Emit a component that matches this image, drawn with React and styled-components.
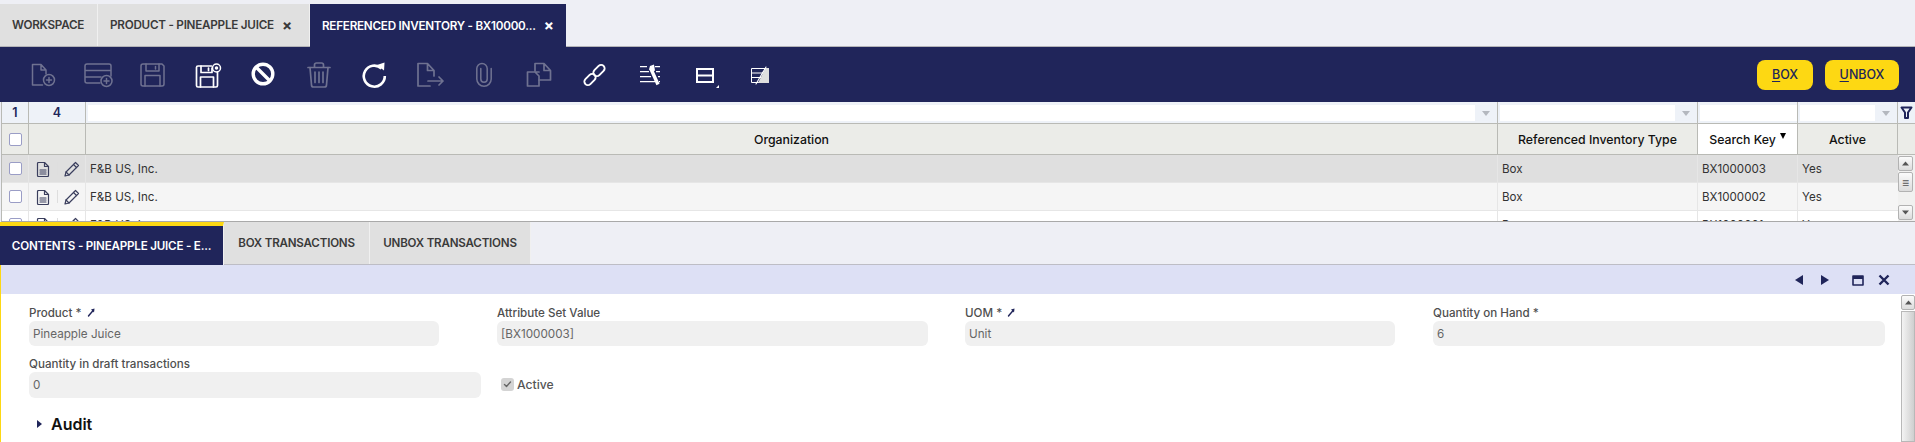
import React from 'react';
import styled, { createGlobalStyle } from 'styled-components';

const NAVY = '#20255a';
const YELLOW = '#fdd813';
const FAINT = '#6f7291';
const WHITE = '#ffffff';
const LINE = '#b9bab5';
const COLUMNS = '27px 57px 1412px 200px 100px 100px 1fr';

const GlobalStyle = createGlobalStyle`
  html, body {
    margin: 0;
    padding: 0;
    height: 442px;
    overflow: hidden;
    background: #eeeff5;
    font-family: Inter, "Noto Sans", sans-serif;
    font-size: 12px;
    color: #202020;
  }
  * { box-sizing: border-box; }
`;

const Page = styled.div`
  width: 1915px;
  height: 442px;
  display: flex;
  flex-direction: column;
  overflow: hidden;
`;

/* top tabs */
const TopTabs = styled.div`
  height: 47px;
  padding-top: 4px;
  display: flex;
  border-bottom: 1px solid #b4b4b8;
`;

const TopTab = styled.div`
  width: ${p => p.$w}px;
  display: flex;
  align-items: center;
  justify-content: space-between;
  padding: 0 17px 0 12px;
  font-size: 11.7px;
  font-weight: 600;
  letter-spacing: -0.25px;
  white-space: nowrap;
  background: ${p => (p.$active ? NAVY : '#e0e0e0')};
  color: ${p => (p.$active ? WHITE : '#3a3a3a')};
  border-right: 1px solid ${p => (p.$active ? NAVY : '#f0f0f0')};
  margin-bottom: ${p => (p.$active ? '-1px' : '0')};
`;

const CloseMark = styled.span`
  font-size: 15px;
  font-weight: 700;
  margin-left: 8px;
`;

/* toolbar */
const Toolbar = styled.div`
  height: 55px;
  background: ${NAVY};
  display: flex;
  align-items: center;
  justify-content: space-between;
  padding: 0 16px 0 15px;
`;

const ToolIcons = styled.div`
  display: flex;
  align-items: center;
`;

const ToolCell = styled.div`
  width: 55.2px;
  height: 36px;
  display: flex;
  justify-content: center;
  color: ${p => (p.$on ? WHITE : FAINT)};
`;

const ToolButtons = styled.div`
  display: flex;
  gap: 12px;
`;

const YellowButton = styled.div`
  width: ${p => p.$w}px;
  height: 30px;
  border-radius: 8px;
  background: ${YELLOW};
  color: ${NAVY};
  font-size: 12.5px;
  font-weight: 500;
  display: flex;
  align-items: center;
  justify-content: center;

  u { text-underline-offset: 2px; }
`;

/* grid */
const Grid = styled.div`
  height: 120px;
  margin-left: 1px;
  border-left: 1px solid ${LINE};
  border-bottom: 1px solid #a9a9a9;
  background: ${WHITE};
  overflow: hidden;
  display: flex;
  flex-direction: column;
`;

const Cols = styled.div`
  display: grid;
  grid-template-columns: ${COLUMNS};
`;

const FilterRow = styled(Cols)`
  height: 22px;
  background: #eef2f8;
  border-bottom: 1px solid ${LINE};
`;

const CountCell = styled.div`
  display: flex;
  align-items: center;
  justify-content: center;
  color: ${NAVY};
  font-size: 12.5px;
  font-weight: 600;
  border-right: 1px solid ${LINE};
`;

const FilterCell = styled.div`
  display: flex;
  align-items: stretch;
  padding: 3px 0 2px 2px;
  border-right: 1px solid ${LINE};
`;

const FilterInput = styled.div`
  flex: 1;
  background: ${WHITE};
`;

const FilterDrop = styled.div`
  width: 22px;
  display: flex;
  align-items: center;
  justify-content: center;

  &::after {
    content: '';
    border-left: 4.5px solid transparent;
    border-right: 4.5px solid transparent;
    border-top: 5px solid #b4b8bf;
  }
`;

const FunnelCell = styled.div`
  display: flex;
  align-items: center;
  justify-content: center;
  color: ${NAVY};
`;

const HeaderRow = styled(Cols)`
  height: 31px;
  background: #ebece8;
  border-bottom: 1px solid ${LINE};
`;

const HeaderCell = styled.div`
  display: flex;
  align-items: center;
  justify-content: center;
  font-size: 12.3px;
  font-weight: 500;
  color: #111;
  border-right: 1px solid ${LINE};
  background: ${p => (p.$sorted ? WHITE : 'transparent')};
`;

const SortMark = styled.span`
  width: 0;
  height: 0;
  margin: 0 0 6px 4px;
  border-left: 3.5px solid transparent;
  border-right: 3.5px solid transparent;
  border-top: 6px solid #000;
`;

const CheckBox = styled.span`
  width: 13px;
  height: 13px;
  border: 1px solid #9a9dc6;
  border-radius: 2px;
  background: ${WHITE};
`;

const BoxCell = styled.div`
  display: flex;
  align-items: center;
  justify-content: center;
  border-right: 1px solid ${p => p.$line};
`;

const GridBody = styled.div`
  flex: 1;
  min-height: 0;
  display: flex;
`;

const Rows = styled.div`
  width: 1896px;
`;

const DataRow = styled.div`
  height: 28px;
  display: grid;
  grid-template-columns: 27px 57px 1412px 200px 100px 100px;
  background: ${p => p.$bg};
  border-bottom: 1px solid #e6e6e6;
`;

const DataCell = styled.div`
  display: flex;
  align-items: center;
  padding-left: 4px;
  font-size: 11.6px;
  color: #333;
  border-right: 1px solid ${p => (p.$last ? 'transparent' : '#e6e6e6')};
`;

const RowIcons = styled.div`
  display: flex;
  align-items: center;
  padding-left: 6px;
  color: #3b3f5e;
  border-right: 1px solid #e6e6e6;
`;

const RowDivider = styled.span`
  width: 1px;
  height: 13px;
  margin: 0 6px;
  background: #dedede;
`;

const GridScroll = styled.div`
  flex: 1;
  display: flex;
  flex-direction: column;
  justify-content: space-between;
  padding: 1px 2px 1px 0;
  background: #f1f1f0;
`;

const ScrollBtn = styled.div`
  height: ${p => p.$h || 15}px;
  border: 1px solid #b2b2b2;
  border-radius: 2px;
  background: linear-gradient(#fbfbfb, #dcdcdc);
  display: flex;
  align-items: center;
  justify-content: center;
  color: #555;
  flex-shrink: 0;
`;

const ScrollTop = styled.div`
  display: flex;
  flex-direction: column;
  gap: 1px;
`;

/* lower tabs */
const SubTabs = styled.div`
  height: 43px;
  display: flex;
  border-bottom: 1px solid #bdbdc5;
`;

const SubTab = styled.div`
  width: ${p => p.$w}px;
  display: flex;
  align-items: center;
  justify-content: center;
  font-size: 11.6px;
  font-weight: 600;
  letter-spacing: -0.2px;
  white-space: nowrap;
  background: ${p => (p.$active ? NAVY : '#e0e0e0')};
  color: ${p => (p.$active ? WHITE : '#3a3a3a')};
  border-top: ${p => (p.$active ? `4px solid ${YELLOW}` : 'none')};
  border-right: 1px solid #f0f0f0;
  margin-bottom: ${p => (p.$active ? '-1px' : '0')};
`;

const Detail = styled.div`
  flex: 1;
  min-height: 0;
  display: flex;
  flex-direction: column;
  background: ${WHITE};
  border-left: 1px solid ${YELLOW};
`;

const StatusBar = styled.div`
  height: 29px;
  background: #dde0f5;
  display: flex;
  align-items: center;
  justify-content: flex-end;
  padding-right: 18px;
  color: ${NAVY};
`;

const StatusBtn = styled.div`
  width: ${p => p.$w || 26}px;
  margin-left: ${p => p.$gap || 0}px;
  display: flex;
  justify-content: center;
`;

const DetailBody = styled.div`
  flex: 1;
  min-height: 0;
  display: flex;
`;

const Form = styled.div`
  flex: 1;
  padding: 10px 0 0 28px;
`;

const FieldGrid = styled.div`
  display: grid;
  grid-template-columns: repeat(4, 468px);
  row-gap: 9px;
`;

const Field = styled.div`
  display: flex;
  flex-direction: column;
`;

const Label = styled.div`
  height: 17px;
  display: flex;
  align-items: center;
  gap: 5px;
  font-size: 11.6px;
  font-weight: 500;
  color: #4f4f4f;
`;

const Input = styled.div`
  width: ${p => p.$w}px;
  height: ${p => p.$h || 25}px;
  padding-left: 4px;
  display: flex;
  align-items: center;
  border-radius: 6px;
  background: #f0f0f0;
  font-size: 11.7px;
  color: #666;
`;

const CheckField = styled.div`
  display: flex;
  align-items: center;
  gap: 3px;
  padding: 16px 0 0 4px;
  font-size: 12.2px;
  font-weight: 500;
  color: #555;
`;

const DisabledCheck = styled.span`
  width: 13px;
  height: 13px;
  border-radius: 3px;
  background: #d4d4d4;
  color: #666;
  display: flex;
  align-items: center;
  justify-content: center;
`;

const Section = styled.div`
  margin-top: 16px;
  padding-left: 8px;
  display: flex;
  align-items: center;
  gap: 9px;
  font-size: 16px;
  font-weight: 600;
  color: #111;

  &::before {
    content: '';
    border-top: 4.5px solid transparent;
    border-bottom: 4.5px solid transparent;
    border-left: 5px solid #20255a;
  }
`;

const FormScroll = styled.div`
  width: 16px;
  display: flex;
  flex-direction: column;
  gap: 1px;
  padding-top: 1px;
`;

const FormThumb = styled.div`
  flex: 1;
  border: 1px solid #b8b8b8;
  background: linear-gradient(90deg, #f3f3f3, #cfcfcf);
`;

const Svg = ({ children, size = 36, ...rest }) => (
  <svg
    width={size}
    height={size}
    viewBox={`0 0 ${size} ${size}`}
    fill="none"
    stroke="currentColor"
    strokeWidth="1.5"
    strokeLinejoin="round"
    strokeLinecap="round"
    {...rest}
  >
    {children}
  </svg>
);

const Plus = ({ x, y, r = 5.5 }) => (
  <>
    <circle cx={x} cy={y} r={r} />
    <path d={`M${x - 2.5} ${y}h5M${x} ${y - 2.5}v5`} />
  </>
);

const toolIcons = [
  { on: false, draw: (
    <>
      <path d="M17.5 28H7.5V7.5h8.5l5 5.5v4M16 7.5v5.5h5" />
      <Plus x={24} y={23} />
    </>
  ) },
  { on: false, draw: (
    <>
      <path d="M20 26H7a2 2 0 0 1-2-2V9a2 2 0 0 1 2-2h22a2 2 0 0 1 2 2v10M5 13.5h26M5 20h16" />
      <Plus x={26.5} y={24} />
    </>
  ) },
  { on: false, draw: (
    <>
      <path d="M8 7h19l2 2v18a2 2 0 0 1-2 2H8a2 2 0 0 1-2-2V9a2 2 0 0 1 2-2z" />
      <path d="M11 7v7h13V7M20.5 9.5v2.5M10 29V18.5h15V29" />
    </>
  ) },
  { on: true, draw: (
    <>
      <path d="M21.5 9H8a1.5 1.5 0 0 0-1.5 1.5v18A1.5 1.5 0 0 0 8 30h18a1.5 1.5 0 0 0 1.5-1.5V15" strokeWidth="1.7" />
      <path d="M11 9v6.5h11V11M18.5 11v2.5M10.5 30V20h13v10" strokeWidth="1.7" />
      <circle cx={26.5} cy={11} r={4} strokeWidth="1.5" />
      <circle cx={26.5} cy={11} r={1} fill="currentColor" />
    </>
  ) },
  { on: true, draw: (
    <>
      <circle cx={18} cy={17} r={9.8} strokeWidth="3.4" />
      <path d="M11 10l14 14" strokeWidth="3.4" strokeLinecap="butt" />
    </>
  ) },
  { on: false, draw: (
    <>
      <path d="M7 10.5h22M13.5 10.5V8a2 2 0 0 1 2-2h5a2 2 0 0 1 2 2v2.5" strokeWidth="1.7" />
      <path d="M9 10.5l1.5 17.5a2 2 0 0 0 2 2h11a2 2 0 0 0 2-2L27 10.5M14 15v10.5M18 15v10.5M22 15v10.5" strokeWidth="1.7" />
    </>
  ) },
  { on: true, draw: (
    <>
      <path d="M25.5 11.5a10.5 10.5 0 1 0 3.3 7.5" strokeWidth="2.6" strokeLinecap="butt" />
      <path d="M21 8l7.5-2.5-.5 8z" fill="currentColor" stroke="none" />
    </>
  ) },
  { on: false, draw: (
    <>
      <path d="M19 29H7V6.5h9.5l6.5 7V19M16.5 6.5V13.5H23" strokeWidth="1.7" />
      <path d="M17 24h15M28 20l4 4-4 4" strokeWidth="1.7" />
    </>
  ) },
  { on: false, draw: (
    <path d="M14 12v13a4 4 0 0 0 8 0V12a6.5 6.5 0 0 0-13 0v13a9 9 0 0 0 18 0V12" strokeWidth="1.9" transform="translate(3.6 2) scale(0.8)" />
  ) },
  { on: false, draw: (
    <>
      <path d="M18 15H6.5v14H18V19l-4-4" strokeWidth="1.7" />
      <path d="M14 14V6.5h9l6.5 7V23H18M23 6.5v7h6.5" strokeWidth="1.7" />
    </>
  ) },
  { on: true, draw: (
    <>
      <rect x="7.5" y="19" width="13" height="7" rx="3.5" transform="rotate(-45 14 22.5)" strokeWidth="1.9" />
      <rect x="16.5" y="10" width="13" height="7" rx="3.5" transform="rotate(-45 23 13.5)" strokeWidth="1.9" />
    </>
  ) },
  { on: true, draw: (
    <>
      <path d="M8 9.7h7M8 14.7h9M8 19.7h11M8 24.7h15M23 9.7h5M24 14.7h4M26 19.7h2M27 24.7h1" strokeWidth="1.2" strokeLinecap="butt" />
      <path d="M19 12l7 15.5" strokeWidth="3.4" strokeLinecap="butt" />
      <path d="M22 7.5l-4 1.5-1 3.5 3 2.5 3-1.5" fill="currentColor" stroke="none" />
    </>
  ) },
  { on: true, draw: (
    <>
      <rect x="10" y="12" width="16" height="13" strokeWidth="2" strokeLinejoin="miter" />
      <path d="M10 18.5h16" strokeWidth="2" strokeLinecap="butt" />
      <path d="M32 28v3h-3z" fill="currentColor" stroke="none" />
    </>
  ) },
  { on: true, draw: (
    <>
      <path d="M9.5 11.5h17v14h-17zM9.5 16h12M9.5 20.5h10" strokeWidth="1" strokeLinecap="butt" />
      <path d="M23.5 11h3.5v15H16z" fill="#dedede" stroke="none" />
      <path d="M14 27l10-17" strokeWidth="1.1" />
    </>
  ) },
];

const DocIcon = () => (
  <Svg size={16} strokeWidth="1.2">
    <path d="M3 1.5h6.5L13.5 5.5v9a1 1 0 0 1-1 1h-9a1 1 0 0 1-1-1v-12a1 1 0 0 1 1-1z" />
    <path d="M9.5 1.5v4h4M5 9h6M5 11h6M5 13h6" />
  </Svg>
);

const PencilIcon = () => (
  <Svg size={16} strokeWidth="1.2">
    <path d="M11.5 1.5l3 3L5 14l-4 1 1-4z" />
    <path d="M9.5 3.5l3 3M2 11l3 3" />
  </Svg>
);

const FunnelIcon = () => (
  <Svg size={13} strokeWidth="2" strokeLinecap="butt">
    <path d="M1.5 1.5h10L8 6.5v5.5H5V6.5z" />
  </Svg>
);

const LinkArrow = () => (
  <Svg size={9} stroke="#20255a" strokeWidth="1.4" style={{ flexShrink: 0 }}>
    <path d="M1.5 8C3 6 5 4 6.5 2" />
    <path d="M4 1.5l3.5-1L7 4.5z" fill="#20255a" stroke="none" />
  </Svg>
);

const Triangle = ({ up }) => (
  <Svg size={9} stroke="none" fill="currentColor">
    <path d={up ? 'M4.5 2.5l3.5 4H1z' : 'M4.5 6.5L1 2.5h7z'} />
  </Svg>
);

const rows = [
  { bg: '#dfdfdf', key: 'BX1000003' },
  { bg: '#f5f5f5', key: 'BX1000002' },
  { bg: '#ffffff', key: 'BX1000001' },
];

export default function App() {
  return (
    <Page>
      <GlobalStyle />

      <TopTabs>
        <TopTab $w={98}>WORKSPACE</TopTab>
        <TopTab $w={212}>PRODUCT - PINEAPPLE JUICE<CloseMark>×</CloseMark></TopTab>
        <TopTab $w={256} $active>REFERENCED INVENTORY - BX10000...<CloseMark>×</CloseMark></TopTab>
      </TopTabs>

      <Toolbar>
        <ToolIcons>
          {toolIcons.map((icon, i) => (
            <ToolCell key={i} $on={icon.on}><Svg>{icon.draw}</Svg></ToolCell>
          ))}
        </ToolIcons>
        <ToolButtons>
          <YellowButton $w={56}><span><u>B</u>OX</span></YellowButton>
          <YellowButton $w={74}><span><u>U</u>NBOX</span></YellowButton>
        </ToolButtons>
      </Toolbar>

      <Grid>
        <FilterRow>
          <CountCell>1</CountCell>
          <CountCell>4</CountCell>
          <FilterCell><FilterInput /><FilterDrop /></FilterCell>
          <FilterCell><FilterInput /><FilterDrop /></FilterCell>
          <FilterCell><FilterInput /></FilterCell>
          <FilterCell><FilterInput /><FilterDrop /></FilterCell>
          <FunnelCell><FunnelIcon /></FunnelCell>
        </FilterRow>

        <HeaderRow>
          <BoxCell $line={LINE}><CheckBox /></BoxCell>
          <HeaderCell />
          <HeaderCell>Organization</HeaderCell>
          <HeaderCell>Referenced Inventory Type</HeaderCell>
          <HeaderCell $sorted>Search Key<SortMark /></HeaderCell>
          <HeaderCell>Active</HeaderCell>
          <div />
        </HeaderRow>

        <GridBody>
          <Rows>
            {rows.map(row => (
              <DataRow key={row.key} $bg={row.bg}>
                <BoxCell $line="#e6e6e6"><CheckBox /></BoxCell>
                <RowIcons><DocIcon /><RowDivider /><PencilIcon /></RowIcons>
                <DataCell>F&amp;B US, Inc.</DataCell>
                <DataCell>Box</DataCell>
                <DataCell>{row.key}</DataCell>
                <DataCell $last>Yes</DataCell>
              </DataRow>
            ))}
          </Rows>
          <GridScroll>
            <ScrollTop>
              <ScrollBtn><Triangle up /></ScrollBtn>
              <ScrollBtn $h={20}>≡</ScrollBtn>
            </ScrollTop>
            <ScrollBtn><Triangle /></ScrollBtn>
          </GridScroll>
        </GridBody>
      </Grid>

      <SubTabs>
        <SubTab $w={224} $active>CONTENTS - PINEAPPLE JUICE - E...</SubTab>
        <SubTab $w={146}>BOX TRANSACTIONS</SubTab>
        <SubTab $w={161}>UNBOX TRANSACTIONS</SubTab>
      </SubTabs>

      <Detail>
        <StatusBar>
          <StatusBtn>
            <Svg size={12} stroke="none" fill="currentColor"><path d="M10 1v10L2 6z" /></Svg>
          </StatusBtn>
          <StatusBtn>
            <Svg size={12} stroke="none" fill="currentColor"><path d="M2 1v10l8-5z" /></Svg>
          </StatusBtn>
          <StatusBtn $gap={7}>
            <Svg size={12} strokeWidth="1.6"><path d="M1 2h10v9H1z" /><path d="M1 3.5h10" strokeWidth="3" strokeLinecap="butt" /></Svg>
          </StatusBtn>
          <StatusBtn>
            <Svg size={12} strokeWidth="2.4" strokeLinecap="butt"><path d="M1.5 1.5l9 9M10.5 1.5l-9 9" /></Svg>
          </StatusBtn>
        </StatusBar>

        <DetailBody>
          <Form>
            <FieldGrid>
              <Field>
                <Label>Product * <LinkArrow /></Label>
                <Input $w={410}>Pineapple Juice</Input>
              </Field>
              <Field>
                <Label>Attribute Set Value</Label>
                <Input $w={431}>[BX1000003]</Input>
              </Field>
              <Field>
                <Label>UOM * <LinkArrow /></Label>
                <Input $w={430}>Unit</Input>
              </Field>
              <Field>
                <Label>Quantity on Hand *</Label>
                <Input $w={452}>6</Input>
              </Field>
              <Field>
                <Label>Quantity in draft transactions</Label>
                <Input $w={452} $h={26}>0</Input>
              </Field>
              <CheckField>
                <DisabledCheck>
                  <Svg size={9} strokeWidth="1.4"><path d="M1.5 4.5l2 2 4-4.5" /></Svg>
                </DisabledCheck>
                Active
              </CheckField>
            </FieldGrid>
            <Section>Audit</Section>
          </Form>
          <FormScroll>
            <ScrollBtn><Triangle up /></ScrollBtn>
            <FormThumb />
          </FormScroll>
        </DetailBody>
      </Detail>
    </Page>
  );
}
